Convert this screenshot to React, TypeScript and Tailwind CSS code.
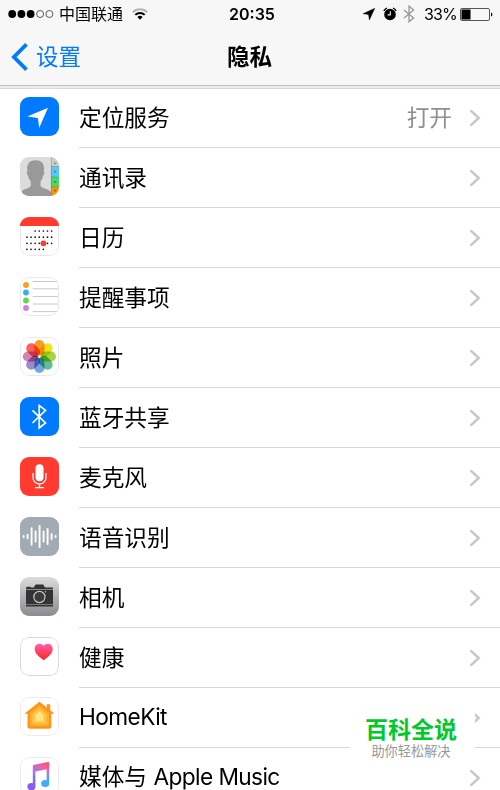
import type { ReactNode } from "react";

function Tile({ children, outline }: { children: ReactNode; outline?: string }) {
  return (
    <svg viewBox="0 0 39 39" className="block h-[39px] w-[39px] rounded-[9px]">
      {children}
      {outline && (
        <rect x="0.5" y="0.5" width="38" height="38" rx="8.5" fill="none" stroke={outline} />
      )}
    </svg>
  );
}

function LocationIcon() {
  return (
    <Tile>
      <rect width="39" height="39" fill="#007aff" />
      <path d="M28 10.7 7.3 19.5l10.6 1.6L19.2 31z" fill="#fff" />
    </Tile>
  );
}

function ContactsIcon() {
  return (
    <Tile>
      <rect width="39" height="39" fill="#dcdcdc" />
      <path
        d="M15.7 3.2c-5.7 0-8.5 3.3-8.5 8 0 1.4.3 2.3.1 3.3-.9.3-.6 3.5.8 4.1.5 3 1.5 4.4 2.7 5.9v4.2C9.7 31.8 3 31.5 1 35v4h30v-4c-2.5-3.500-9.500-3.200-10.500-6.300v-4.200c1.200-1.500 2.100-2.900 2.600-5.900 1.400-.6 1.700-3.800.8-4.100-.2-1 .1-1.900.1-3.300 0-4.700-2.600-8-8.300-8z"
        fill="#999"
      />
      <rect x="31" width="8" height="39" fill="#cfccc6" />
      <rect x="31" y="9.5" width="8" height="10.5" fill="#5ac8fa" />
      <rect x="31" y="20" width="8" height="10" fill="#4cd964" />
      <rect x="31" y="30" width="8" height="9" fill="#ff9500" />
      <path d="M31 9.5h8M31 20h8M31 30h8M31.3 0v39" stroke="#00000038" strokeWidth="0.7" />
      <path d="M34 6.3h2.3M34 14.7h2.3M34 25h2.3M34 33.5h2.3" stroke="#00000048" strokeWidth="1.8" />
    </Tile>
  );
}

const calendarDots = [
  { y: 14, from: 2, to: 6 },
  { y: 20.2, from: 0, to: 6 },
  { y: 26.3, from: 0, to: 6 },
  { y: 32.3, from: 0, to: 4 },
];

function CalendarIcon() {
  return (
    <Tile>
      <rect x="0.5" y="0.5" width="38" height="38" rx="8.5" fill="#fff" stroke="#e9e9e9" />
      {calendarDots.map((row) =>
        Array.from({ length: row.to - row.from + 1 }, (_, i) => (
          <circle key={`${row.y}-${i}`} cx={6.9 + (row.from + i) * 4.12} cy={row.y} r="0.85" fill="#111" />
        )),
      )}
      <circle cx="23.4" cy="26.3" r="2.9" fill="#ff3b30" />
      <path d="M0 9V0h39v9z" fill="#ff3b30" />
    </Tile>
  );
}

function RemindersIcon() {
  return (
    <Tile outline="#e9e9e9">
      <rect width="39" height="39" fill="#fff" />
      <path d="M12.7 4.5H39M12.7 11.8H39M12.7 19.6H39M12.7 27H39M12.7 34.6H39" stroke="#c8c8cb" />
      <circle cx="6" cy="8" r="2.9" fill="#ff9f1c" />
      <circle cx="6" cy="15.5" r="2.9" fill="#2fb1f7" />
      <circle cx="6" cy="23.5" r="2.9" fill="#5fdc3e" />
      <circle cx="6" cy="31" r="2.9" fill="#cf7ee8" />
    </Tile>
  );
}

const petals = ["#fa9d1c", "#f0e316", "#a8d345", "#62bf95", "#70a8e0", "#9a8bc9", "#d484b4", "#f8625a"];

function PhotosIcon() {
  return (
    <Tile outline="#e9e9e9">
      <rect width="39" height="39" fill="#fff" />
      {petals.map((color, i) => (
        <rect
          key={color}
          x="14.3"
          y="2.9"
          width="10.2"
          height="15.4"
          rx="5.1"
          fill={color}
          transform={`rotate(${i * 45} 19.4 19.5)`}
          className="mix-blend-multiply"
        />
      ))}
      <circle cx="19.4" cy="19.5" r="1" fill="#fff" />
    </Tile>
  );
}

function BluetoothIcon() {
  return (
    <Tile>
      <rect width="39" height="39" fill="#007aff" />
      <path d="m12.5 13.4 13 12.6-6.3 5V8.4l6.3 5-13 12.6" fill="none" stroke="#fff" strokeWidth="1.7" />
    </Tile>
  );
}

function MicrophoneIcon() {
  return (
    <Tile>
      <rect width="39" height="39" fill="#ff3b30" />
      <rect x="15.5" y="7.3" width="8" height="17" rx="4" fill="#fff" />
      <path d="M13 16v4.500a6.500 6.500 0 0 0 13 0V16M19.500 27v3.500M15 30.600h9" fill="none" stroke="#fff" strokeWidth="1.3" />
    </Tile>
  );
}

const waveBars = [1, 3.4, 16.5, 10, 21, 10, 15, 5, 1];

function SpeechIcon() {
  return (
    <Tile>
      <rect width="39" height="39" fill="#a2aab4" />
      {waveBars.map((h, i) => (
        <path
          key={i}
          d={`M${3.6 + i * 4} ${19.5 - h / 2}v${h}`}
          stroke="#fff"
          strokeWidth="1.9"
          strokeLinecap="round"
        />
      ))}
    </Tile>
  );
}

function CameraIcon() {
  return (
    <Tile>
      <defs>
        <linearGradient id="camera-bg" x2="0" y2="1">
          <stop stopColor="#dbdcde" />
          <stop offset="1" stopColor="#898b90" />
        </linearGradient>
      </defs>
      <rect width="39" height="39" fill="url(#camera-bg)" />
      <path d="M6 12V10.500l1.500-.7h3l.7.7h2.600L15.600 7.500h7.600L25 10.500h7.800V12z" fill="#333" />
      <rect x="6" y="12.6" width="27" height="14.6" fill="#333" />
      <rect x="6" y="27.8" width="27" height="1.7" fill="#333" />
      <circle cx="19.4" cy="20" r="7" fill="#333" />
      <circle cx="19.4" cy="20" r="5.6" fill="#3b3b3b" stroke="#c5c6c8" strokeWidth="1.2" />
      <circle cx="25.5" cy="14.7" r="0.7" fill="#fc0" />
    </Tile>
  );
}

function HealthIcon() {
  return (
    <Tile outline="#d8d8d8">
      <defs>
        <linearGradient id="heart" x2="0" y2="1">
          <stop stopColor="#ff5fb4" />
          <stop offset="1" stopColor="#ff2617" />
        </linearGradient>
      </defs>
      <rect width="39" height="39" fill="#fff" />
      <path
        d="M23.7 23.2c-4.3-3-9-6.5-9-11.2 0-3 2-5.3 4.6-5.3 2 0 3.500.8 4.400 2.200.9-1.400 2.400-2.200 4.400-2.200 2.600 0 4.600 2.300 4.600 5.300 0 4.700-4.700 8.200-9 11.200z"
        fill="url(#heart)"
      />
    </Tile>
  );
}

function HomeKitIcon() {
  return (
    <Tile outline="#ececec">
      <rect width="39" height="39" fill="#fff" />
      <path
        d="M19.4 5 5 16.5h2.8v13c0 1.300.6 1.900 1.900 1.900h19.400c1.300 0 1.900-.6 1.900-1.900v-13h2.800L30 13.300V7.500h-3v3.400z"
        fill="#ff9413"
        stroke="#ff9413"
        strokeWidth="0.5"
        strokeLinejoin="round"
      />
      <path d="m19.4 8.3-9.6 7.8v13h19.200v-13z" fill="#ffaf32" />
      <path d="m19.4 11.2-7 6v9.600h14v-9.600z" fill="#ffc54a" />
      <path d="m19.4 14.3-4 3.600v6.400h8v-6.400z" fill="#ffe680" />
    </Tile>
  );
}

function MusicIcon() {
  return (
    <Tile outline="#ececec">
      <defs>
        <linearGradient id="note" x1="0.9" y1="0" x2="0.4" y2="1">
          <stop stopColor="#ff5168" />
          <stop offset="0.3" stopColor="#ed60a5" />
          <stop offset="0.65" stopColor="#a875ee" />
          <stop offset="1" stopColor="#6f6cf6" />
        </linearGradient>
        <linearGradient id="note-end" x2="0" y2="1">
          <stop stopColor="#ff5168" />
          <stop offset="0.4" stopColor="#d66ac9" />
          <stop offset="0.8" stopColor="#42a9fb" />
        </linearGradient>
      </defs>
      <rect width="39" height="39" fill="#fff" />
      <g transform="translate(.5 .5)">
        <path d="M12.3 28.5V8.700c0-.9.400-1.300 1.200-1.500l14-2.600c.8-.1 1.200.2 1.200 1v5.600l-13.800 2.800v14.500z" fill="url(#note)" />
        <ellipse cx="10.9" cy="29.2" rx="4" ry="3.6" fill="#8a5cf7" />
        <path d="M26.1 24.5V6h2.600v19.800z" fill="url(#note-end)" />
        <ellipse cx="24.7" cy="26" rx="4" ry="3.6" fill="#42a9fb" />
      </g>
    </Tile>
  );
}

const items = [
  { label: "定位服务", icon: <LocationIcon />, value: "打开" },
  { label: "通讯录", icon: <ContactsIcon /> },
  { label: "日历", icon: <CalendarIcon /> },
  { label: "提醒事项", icon: <RemindersIcon /> },
  { label: "照片", icon: <PhotosIcon /> },
  { label: "蓝牙共享", icon: <BluetoothIcon /> },
  { label: "麦克风", icon: <MicrophoneIcon /> },
  { label: "语音识别", icon: <SpeechIcon /> },
  { label: "相机", icon: <CameraIcon /> },
  { label: "健康", icon: <HealthIcon /> },
  { label: "", latin: "HomeKit", icon: <HomeKitIcon /> },
  { label: "媒体与 ", latin: "Apple Music", icon: <MusicIcon /> },
];

function StatusBar() {
  return (
    <div className="grid h-7 grid-cols-[1fr_auto_1fr] items-center pr-[7px] pl-2 text-base leading-none">
      <div className="flex items-center">
        <svg viewBox="0 0 47 10" className="h-[10px] w-[47px]">
          {[4.2, 13.4, 22.6].map((x) => (
            <circle key={x} cx={x} cy="5" r="3.9" />
          ))}
          {[32.1, 41.4].map((x) => (
            <circle key={x} cx={x} cy="5" r="3.5" fill="none" stroke="#333" strokeWidth="0.8" />
          ))}
        </svg>
        <span className="ml-1">中国联通</span>
        <svg viewBox="0 0 16 12" className="ml-[9px] h-3 w-4" fill="none" strokeWidth="1.9">
          <path d="M.8 4.3a10.2 10.2 0 0 1 14.4 0" stroke="#b4b4b4" />
          <path d="M3.3 6.9a6.7 6.7 0 0 1 9.4 0" stroke="#000" />
          <path d="M5.4 9.1a3.7 3.7 0 0 1 5.2 0L8 11.7z" fill="#000" />
        </svg>
      </div>
      <span className="pl-[3px] font-semibold">20:35</span>
      <div className="flex items-center justify-end">
        <svg viewBox="0 0 12 12" className="h-3 w-3">
          <path d="M11.8.2 0 5.7l5.5.8.9 5.5z" stroke="#000" strokeWidth="0.4" />
        </svg>
        <svg viewBox="0 0 14 14" className="ml-[8px] h-[14px] w-[14px]">
          <circle cx="7" cy="7.5" r="5.8" />
          <path d="M.8 4A7.5 7.5 0 0 1 4 1M13.2 4A7.5 7.5 0 0 0 10 1" fill="none" stroke="#000" strokeWidth="1.3" />
          <path d="M7.3 4.3v3.600H4.600" fill="none" stroke="#f7f7f7" strokeWidth="1.1" />
        </svg>
        <svg viewBox="0 0 12 18" className="ml-[6px] h-[18px] w-3" fill="none" stroke="#999" strokeWidth="1.3">
          <path d="m1 5 9.600 8L6 16.800V1.200L10.600 5 1 13" />
        </svg>
        <span className="ml-[9px] w-[33px] whitespace-nowrap tracking-[-0.9px]">33%</span>
        <svg viewBox="0 0 33 13" className="ml-[3px] h-[13px] w-[33px]">
          <rect x="0.5" y="0.5" width="29" height="12" rx="1.5" fill="none" stroke="#555" />
          <rect x="1.5" y="1.5" width="9" height="10" />
          <path d="M31 4.5c1.800.5 1.800 3.500 0 4z" />
        </svg>
      </div>
    </div>
  );
}

function NavBar() {
  return (
    <div className="grid h-[57px] grid-cols-[1fr_auto_1fr] items-center text-[22.5px] leading-none">
      <div className="flex items-center pl-[11px] text-[#007aff]">
        <svg viewBox="0 0 17 28" className="h-7 w-[17px]" fill="none" stroke="currentColor" strokeWidth="3.8">
          <path d="M15.5 1.3 2.9 14l12.600 12.700" />
        </svg>
        <span className="ml-2 pt-px">设置</span>
      </div>
      <h1 className="pr-px pt-px font-bold">隐私</h1>
    </div>
  );
}

export default function App() {
  return (
    <div className="relative h-[790px] w-[500px] overflow-hidden bg-white font-[Inter,'Noto_Sans_CJK_SC',sans-serif] text-black">
      <header className="h-[86px] border-b border-[#c0c0c4] bg-[#f7f7f7]">
        <StatusBar />
        <NavBar />
      </header>
      <div className="h-[3px] border-b border-[#d9d9dc] bg-[#ececf1]" />

      <ul>
        {items.map((item, i) => (
          <li key={i} className={i === 0 ? "flex h-[59px]" : "flex h-[60px]"}>
            <div className={i === 0 ? "w-[79px] pt-2 pl-5" : "w-[79px] pt-[9px] pl-5"}>{item.icon}</div>
            <div className="flex flex-1 items-center border-b border-[#d9d9db] pr-[19px] text-[22.7px] leading-none">
              <span className={i === 0 || item.latin ? "flex-1" : "flex-1 pt-[2px]"}>
                {item.label}
                {item.latin && <span className="tracking-[-0.6px]">{item.latin}</span>}
              </span>
              {item.value && <span className="mr-[17px] text-[#8e8e93]">{item.value}</span>}
              <svg viewBox="0 0 12 18" className="h-[18px] w-3" fill="none" stroke="#c7c7cc" strokeWidth="2.5">
                <path d="m1.5 1.4 8.200 7.600-8.200 7.600" />
              </svg>
            </div>
          </li>
        ))}
      </ul>

      <div className="absolute top-[700px] left-[350px] flex h-[66px] w-[125px] flex-col items-center bg-white pt-[18px] pr-[3px]">
        <p className="text-[23px] leading-[24px] font-bold text-[#00c92c]">百科全说</p>
        <p className="mt-[2px] text-[13.2px] leading-[14px] text-[#999]">助你轻松解决</p>
      </div>
    </div>
  );
}
